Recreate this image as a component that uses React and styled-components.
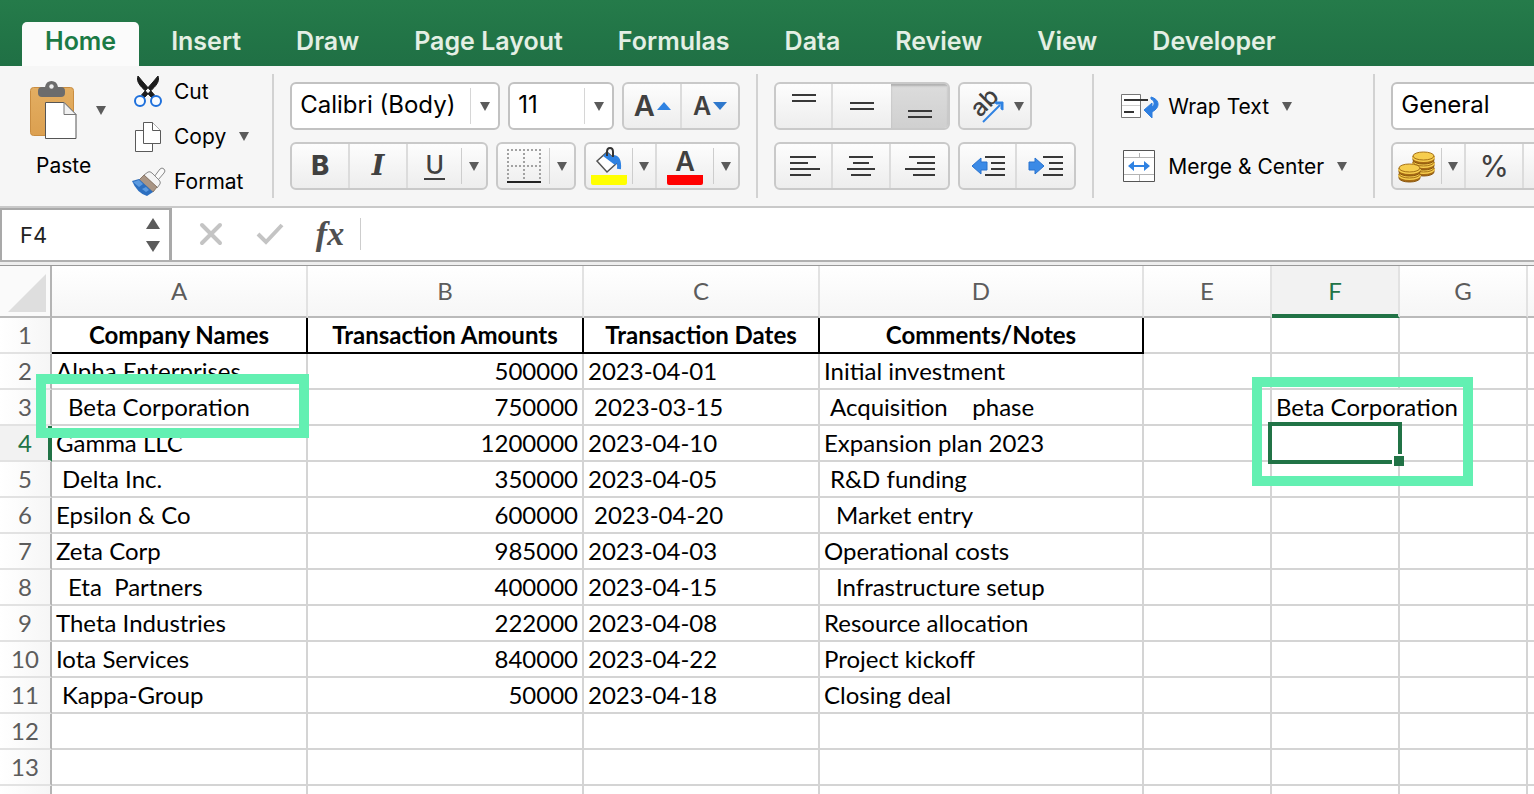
import React from "react";
import styled, { createGlobalStyle, css } from "styled-components";

const UI = `Inter, "Liberation Sans", sans-serif`;
const SHEET = `Lato, "Liberation Sans", sans-serif`;
const GREEN = "#217346";
const MINT = "#63f0b2";
const LINE = "#d4d4d4";

const GlobalStyle = createGlobalStyle`
  *, *::before, *::after { box-sizing: border-box; }
  body { margin: 0; background: #fff; font-family: ${UI}; color: #000; }
  button, input, select { font-family: inherit; color: inherit; margin: 0; }
  button { cursor: pointer; }
  svg { display: block; flex: none; overflow: visible; }
`;

const Window = styled.div`
  display: flex;
  flex-direction: column;
  height: 100vh;
  overflow: hidden;
`;

/* ---------- tabs ---------- */
const TabBar = styled.nav`
  display: flex;
  flex: none;
  gap: 9px;
  padding: 22px 22px 0;
  background: linear-gradient(#257b4a, ${GREEN} 70%, #207045);
`;

const Tab = styled.button`
  height: 44px;
  padding: 0 23px 6px;
  border: 0;
  border-radius: 5px 5px 0 0;
  font-size: 25px;
  font-weight: 600;
  white-space: nowrap;
  background: ${(p) => (p.$active ? "#fbfbfb" : "transparent")};
  color: ${(p) => (p.$active ? "#1b7a45" : "#e4efe4")};
`;

/* ---------- ribbon ---------- */
const Ribbon = styled.div`
  display: flex;
  height: 142px;
  flex: none;
  padding-top: 8px;
  overflow: hidden;
  background: #f6f6f6;
  border-bottom: 2px solid #c9c9c9;
`;

const Section = styled.section`
  display: flex;
  flex: none;
  gap: 8px;
  height: 124px;
  padding: ${(p) => p.$pad || "8px 16px"};
  border-right: ${(p) => (p.$last ? "0" : "2px solid #d2d2d2")};
`;

const Stack = styled.div`
  display: flex;
  flex-direction: column;
  gap: ${(p) => p.$gap || 0}px;
`;

const Row = styled.div`
  display: flex;
  gap: 8px;
`;

const PasteButton = styled.button`
  display: grid;
  grid-template-columns: 50px 46px;
  grid-template-rows: 70px 40px;
  align-items: center;
  justify-items: center;
  height: 110px;
  padding: 0;
  border: 0;
  background: none;
  font-size: 21px;
`;

const PasteLabel = styled.span`
  grid-column: 1 / 3;
  justify-self: start;
  padding-left: 8px;
`;

const LabelButton = styled.button`
  display: flex;
  align-items: center;
  gap: 8px;
  height: ${(p) => p.$h || 34}px;
  padding: 0;
  border: 0;
  background: none;
  font-size: 21px;
  white-space: nowrap;

  & > svg:last-child {
    margin-left: 5px;
  }
`;

const IconSlot = styled.span`
  display: flex;
  width: ${(p) => p.$w || 34}px;
  padding-left: ${(p) => p.$lead || 0}px;
`;

const Group = styled.div`
  display: flex;
  height: 48px;
  border: 2px solid #c9c9c9;
  border-radius: 6px;
  overflow: hidden;
  background: linear-gradient(#fdfdfd, #ededed);
`;

const Segment = styled.button`
  display: flex;
  flex: none;
  align-items: center;
  justify-content: center;
  gap: ${(p) => p.$gap || 0}px;
  width: ${(p) => p.$w || 58}px;
  height: 44px;
  padding: 0 0 0 ${(p) => p.$lead || 0}px;
  border: 0;
  background: ${(p) => (p.$pressed ? "linear-gradient(#dcdcdc, #d0d0d0)" : "none")};
  ${(p) => p.$pressed && css`box-shadow: inset 0 2px 2px #b0b0b0;`}
  ${(p) => p.$divided && css`border-right: 2px solid #dcdcdc;`}
  color: #404040;
`;

const Glyph = styled.span`
  font-family: ${(p) => (p.$serif ? `"DejaVu Serif", serif` : UI)};
  font-size: ${(p) => p.$size || 27}px;
  font-weight: ${(p) => p.$weight || 400};
  font-style: ${(p) => (p.$italic ? "italic" : "normal")};
  line-height: 26px;
  ${(p) => p.$underline && css`padding: 0 1px; border-bottom: 2px solid #404040;`}
`;

const Colored = styled.span`
  display: flex;
  flex-direction: column;
  align-items: center;
  justify-content: flex-end;
  width: 36px;
  height: 38px;
  border-bottom: 10px solid ${(p) => p.$color};
  border-radius: 2px;
`;

const Divider = styled.span`
  width: 1px;
  height: ${(p) => p.$h || 36}px;
  align-self: center;
  background: #cdcdcd;
`;

const SelectBox = styled.div`
  display: grid;
  grid-template-columns: 1fr 28px;
  align-items: center;
  width: ${(p) => p.$w}px;
  height: 48px;
  border: 2px solid #c2c2c2;
  border-radius: 6px;
  background: #fff;
`;

const Select = styled.select`
  grid-area: 1 / 1 / 2 / 3;
  width: 100%;
  height: 44px;
  padding: 0 0 4px 8px;
  border: 0;
  outline: 0;
  appearance: none;
  background: transparent;
  font-size: 24px;
`;

const SelectArrow = styled.span`
  grid-area: 1 / 2;
  display: flex;
  align-items: center;
  justify-content: center;
  height: 36px;
  border-left: 1px solid #d6d6d6;
  pointer-events: none;
`;

/* ---------- formula bar ---------- */
const FormulaBar = styled.div`
  display: flex;
  align-items: center;
  flex: none;
  height: 58px;
  background: #fff;
  border-bottom: 1px solid #999;
  box-shadow: inset 0 -3px #eee, inset 0 -5px #b0b0b0;
  padding-bottom: 5px;
`;

const NameBox = styled.div`
  display: flex;
  align-items: center;
  width: 172px;
  height: 52px;
  padding-right: 9px;
  border: solid #a9a9a9;
  border-width: 2px 3px 0 2px;
`;

const NameInput = styled.input`
  flex: 1;
  min-width: 0;
  height: 44px;
  padding: 0 0 0 18px;
  border: 0;
  outline: 0;
  font-size: 22px;
  color: #222;
`;

const BarButton = styled.button`
  display: flex;
  align-items: center;
  justify-content: center;
  width: ${(p) => p.$w || 58}px;
  height: 44px;
  padding: 0 0 0 ${(p) => p.$lead || 0}px;
  border: 0;
  background: none;
`;

const Fx = styled.span`
  font-family: "Liberation Serif", serif;
  font-style: italic;
  font-weight: 700;
  font-size: 34px;
  line-height: 40px;
  color: #505050;
`;

const FormulaInput = styled.input`
  flex: 1;
  min-width: 0;
  height: 44px;
  padding: 0 12px;
  border: 0;
  outline: 0;
  font-size: 22px;
`;

/* ---------- sheet ---------- */
const Sheet = styled.main`
  flex: 1;
  min-height: 0;
  overflow: hidden;
`;

const Table = styled.table`
  width: 100%;
  min-width: 1534px;
  table-layout: fixed;
  border-collapse: separate;
  border-spacing: 0;
  font-family: ${SHEET};
  font-size: 24px;
  line-height: 30px;

  tr > :last-child {
    border-right: 0;
  }
`;

const Col = styled.col`
  width: ${(p) => (p.$w ? `${p.$w}px` : "auto")};
`;

const ColHead = styled.th`
  height: 52px;
  padding: 0;
  font-weight: 400;
  color: #5c5c5c;
  border-bottom: 2px solid #bababa;
  border-right: 2px solid #e2e2e2;
  background: linear-gradient(#fff, #f6f6f6);
  ${(p) => p.$active && css`
    color: ${GREEN};
    background: #f2f2f2;
    border-bottom-color: ${GREEN};
    box-shadow: inset 0 -2px ${GREEN};
  `}
`;

const Corner = styled.th`
  height: 52px;
  padding: 8px 4px 4px 8px;
  border-right: 2px solid #b4b4b4;
  border-bottom: 2px solid #bababa;
  background: #fafafa;
`;

const RowHead = styled.th`
  height: 36px;
  padding: 0;
  font-weight: 400;
  color: #5c5c5c;
  border-right: 2px solid #b4b4b4;
  border-bottom: 2px solid #e2e2e2;
  background: linear-gradient(90deg, #fff, #f6f6f6);
  ${(p) => p.$active && css`
    color: ${GREEN};
    background: #f2f2f2;
    border-right-color: ${GREEN};
    box-shadow: inset -2px 0 ${GREEN};
  `}
`;

const Cell = styled.td`
  position: relative;
  height: 36px;
  padding: 0 4px;
  white-space: pre;
  text-align: ${(p) => p.$align || "left"};
  text-indent: ${(p) => (p.$indent || 0) * 6}px;
  border-right: 2px solid ${(p) => (p.$spill ? "transparent" : LINE)};
  border-bottom: 2px solid ${LINE};
  ${(p) => p.$heading && css`
    font-weight: 700;
    text-align: center;
    border-color: #000;
  `}
`;

const Highlight = styled.div`
  position: absolute;
  z-index: 2;
  left: ${(p) => p.$x}px;
  top: ${(p) => p.$y}px;
  width: ${(p) => p.$w}px;
  height: ${(p) => p.$h}px;
  border: 10px solid ${MINT};
  pointer-events: none;
`;

const Selection = styled.div`
  position: absolute;
  z-index: 1;
  inset: -4px;
  border: 4px solid ${GREEN};

  &::after {
    content: "";
    position: absolute;
    right: -6px;
    bottom: -6px;
    width: 12px;
    height: 12px;
    background: ${GREEN};
    border: solid #fff;
    border-width: 2px 0 0 2px;
  }
`;

/* ---------- icons ---------- */
const Caret = ({ up, w = 10, h = 9, color = "#5b5b5b" }) => (
  <svg width={w} height={h} viewBox="0 0 10 9" preserveAspectRatio="none" aria-hidden="true">
    <path d={up ? "M0 9 5 0l5 9z" : "M0 0h10L5 9z"} fill={color} />
  </svg>
);

const PasteIcon = () => (
  <svg width="50" height="60" viewBox="0 0 50 60" aria-hidden="true">
    <defs>
      <linearGradient id="board" x1="0" x2="0" y1="0" y2="1">
        <stop offset="0" stopColor="#e3ae62" /><stop offset="1" stopColor="#dca050" />
      </linearGradient>
    </defs>
    <rect x="2.5" y="7.5" width="43" height="48" rx="3" fill="url(#board)" stroke="#c98d41" />
    <path d="M14 17q-4 0-4-4v-2q0-4 4-4h3q1-6 6.500-6T30 7h3q4 0 4 4v2q0 4-4 4z" fill="#6c6c6c" />
    <circle cx="23.500" cy="6.500" r="2.200" fill="#eee" />
    <path d="M17.500 22.500H36l12 12v24H17.500z" fill="#fff" stroke="#555" />
    <path d="M36 22.500v12h12z" fill="#f1f1f1" stroke="#777" />
  </svg>
);

const CutIcon = () => (
  <svg width="32" height="32" viewBox="0 0 32 32" aria-hidden="true">
    <path d="M6 0C4.500 4 6 8 12 13.500L20 22l2.500-3L11 6zM26 0c1.500 4 0 8-6 13.500L12 22l-2.500-3L21 6z" fill="#1c1c1c" stroke="#1c1c1c" />
    <g fill="#f8fbff" stroke="#1e70dc" strokeWidth="2">
      <circle cx="8" cy="25" r="5" /><circle cx="24" cy="25" r="5" />
    </g>
  </svg>
);

const CopyIcon = () => (
  <svg width="28" height="32" viewBox="0 0 28 32" fill="#fff" stroke="#5a5a5a" aria-hidden="true">
    <path d="M1.500 9.500h17v21h-17z" />
    <path d="M9.500 1.500h9l8 8v13h-17z" />
    <path d="M18.500 1.500v8h8" />
  </svg>
);

const BrushIcon = () => (
  <svg width="32" height="30" viewBox="0 0 32 30" aria-hidden="true">
    <path d="M22 10l6-8q2-2 4 0t0 4l-6 7z" fill="#fafafa" stroke="#888" />
    <path d="M16 5q2-1 4 1l7 7q2 2 1 4l-3 4L12 8z" fill="#f4f4f4" stroke="#888" />
    <path d="M12 8l13 12-4 5L7 13z" fill="#a99584" stroke="#8a7868" />
    <path d="M0 14l7-2 14 13-6 4Q5 26 0 14z" fill="#2c6fc0" />
    <path d="M1 15l6-2 4 4-4 3zM10 22l4-2 3 3-3 2z" fill="#5b9ae0" />
  </svg>
);

const BorderIcon = () => (
  <svg width="36" height="36" viewBox="0 0 36 36" aria-hidden="true">
    <path d="M1 2h34M1 18h34M2 1v32M18 1v32M34 1v32" stroke="#a2a2a2" strokeWidth="2" strokeDasharray="2 2" />
    <path d="M1 34h34" stroke="#222" strokeWidth="2" />
  </svg>
);

const BucketIcon = () => (
  <svg width="28" height="28" viewBox="0 0 28 28" aria-hidden="true">
    <path d="M2 14 12 5l11 10-11 10z" fill="#fff" stroke="#555" strokeWidth="1.500" />
    <path d="M8 9l4-4 11 10-3 3z" fill="#2f82e2" />
    <path d="M18 10q7 0 6 12" fill="none" stroke="#2f82e2" strokeWidth="4" />
    <path d="M12 9V5q0-4 3-4t3 4v5" fill="none" stroke="#333" strokeWidth="2" />
  </svg>
);

const Lines = ({ rows, w = 32, h = 24 }) => (
  <svg width={w} height={h} viewBox={`0 0 ${w} ${h}`} stroke="#383838" strokeWidth="2" aria-hidden="true">
    {rows.map(([x1, x2, y]) => <path key={y} d={`M${x1} ${y}H${x2}`} />)}
  </svg>
);

const OrientationIcon = () => (
  <svg width="34" height="36" viewBox="0 0 34 36" aria-hidden="true">
    <text x="0" y="0" transform="translate(10 30) rotate(-45)" fontFamily="Inter, sans-serif" fontSize="24" fontWeight="500" fill="#404040">ab</text>
    <path d="M13 34 30 17" fill="none" stroke="#2f82e2" strokeWidth="2" />
    <path d="M25 14h8v8l-2-1v-5h-5z" fill="#2f82e2" stroke="#2f82e2" />
  </svg>
);

const IndentIcon = ({ right }) => (
  <svg width="36" height="24" viewBox="0 0 36 24" aria-hidden="true">
    <path d={right ? "M1 8h6V4l9 8-9 8v-4H1z" : "M17 8h-6V4l-9 8 9 8v-4h6z"} fill="#3b8ae6" stroke="#2873cf" />
    <path d="M15 3h20M21 9h14M21 15h14M15 21h20" stroke="#383838" strokeWidth="2" />
  </svg>
);

const WrapIcon = () => (
  <svg width="40" height="26" viewBox="0 0 40 26" aria-hidden="true">
    <path d="M1.500 1.500h19v23h-19z" fill="#fff" stroke="#777" />
    <path d="M2 12.500h18" stroke="#ccc" />
    <path d="M4 7h24M4 19h10" stroke="#333" strokeWidth="2" />
    <path d="M31 4c8 2 9 9 4 13l-3 2v6l-8-8 8-7v4c3-2 3-6-1-8z" fill="#2f7fe0" stroke="#2f7fe0" />
  </svg>
);

const MergeIcon = () => (
  <svg width="32" height="32" viewBox="0 0 32 32" aria-hidden="true">
    <path d="M.500.500h31v31H.500z" fill="#fff" stroke="#555" />
    <path d="M1 7.500h30M1 24.500h30M16.500 3v4M16.500 25v6" stroke="#b4b4b4" />
    <path d="M8 16h16" stroke="#2f82e2" strokeWidth="2" />
    <path d="M5 16l6-5v10zM27 16l-6-5v10z" fill="#2f82e2" />
  </svg>
);

const CoinStack = ({ x, y, n }) => (
  <g>
    {Array.from({ length: n }, (_, i) => {
      const cy = y + (n - 1 - i) * 6;
      return (
        <g key={i}>
          <path d={`M${x} ${cy}v4a10.500 4 0 0 0 21 0v-4z`} fill="#a86c14" stroke="#8a560e" />
          <path d={`M${x} ${cy + 1}a10.500 4 0 0 0 21 0`} fill="none" stroke="#f6cd4e" strokeWidth="2" />
          <ellipse cx={x + 10.5} cy={cy} rx="10.500" ry="4" fill="#f6cd4e" stroke="#a87318" />
        </g>
      );
    })}
  </g>
);

const CoinsIcon = () => (
  <svg width="38" height="32" viewBox="0 0 38 32" aria-hidden="true">
    <CoinStack x={15} y={6} n={3} />
    <CoinStack x={1} y={18} n={2} />
  </svg>
);

/* ---------- data ---------- */
const TABS = ["Home", "Insert", "Draw", "Page Layout", "Formulas", "Data", "Review", "View", "Developer"];
const COLUMNS = [["A", 256], ["B", 276], ["C", 236], ["D", 324], ["E", 128], ["F", 128], ["G", 128], ["", 0]];
const HEADINGS = ["Company Names", "Transaction Amounts", "Transaction Dates", "Comments/Notes"];
const DATA = [
  ["Alpha Enterprises", "500000", "2023-04-01", "Initial investment"],
  ["  Beta Corporation", "750000", " 2023-03-15", " Acquisition    phase"],
  ["Gamma LLC", "1200000", "2023-04-10", "Expansion plan 2023"],
  [" Delta Inc.", "350000", "2023-04-05", " R&D funding"],
  ["Epsilon & Co", "600000", " 2023-04-20", "  Market entry"],
  ["Zeta Corp", "985000", "2023-04-03", "Operational costs"],
  ["  Eta  Partners", "400000", "2023-04-15", "  Infrastructure setup"],
  ["Theta Industries", "222000", "2023-04-08", "Resource allocation"],
  ["Iota Services", "840000", "2023-04-22", "Project kickoff"],
  [" Kappa-Group", "50000", "2023-04-18", "Closing deal"],
];
const LAST_ROW = 13;
const ROWS = Array.from({ length: LAST_ROW + 1 }, (_, i) => i + 1);

function SheetCell({ row, col }) {
  if (row === 1 && col < 4) return <Cell $heading>{HEADINGS[col]}</Cell>;
  if (row === 3 && col === 5) {
    return <Cell $spill>Beta Corporation<Highlight $x={-20} $y={-13} $w={221} $h={109} /></Cell>;
  }
  if (row === 4 && col === 5) return <Cell><Selection /></Cell>;
  const value = (DATA[row - 2] && DATA[row - 2][col]) || "";
  const text = value.trimStart();
  return (
    <Cell $align={col === 1 ? "right" : "left"} $indent={value.length - text.length}>
      {text}
      {row === 3 && col === 0 && <Highlight $x={-16} $y={-16} $w={273} $h={64} />}
    </Cell>
  );
}

const DropSegment = ({ label, ...rest }) => (
  <Segment $w={24} aria-label={label} {...rest}><Caret /></Segment>
);

export default function App() {
  return (
    <Window>
      <GlobalStyle />
      <TabBar aria-label="Ribbon tabs">
        {TABS.map((t) => <Tab key={t} $active={t === "Home"}>{t}</Tab>)}
      </TabBar>

      <Ribbon>
        <Section $pad="1px 23px 0 28px">
          <PasteButton>
            <PasteIcon /><Caret />
            <PasteLabel>Paste</PasteLabel>
          </PasteButton>
          <Stack $gap={12}>
            <LabelButton><IconSlot><CutIcon /></IconSlot>Cut</LabelButton>
            <LabelButton><IconSlot $lead={2}><CopyIcon /></IconSlot>Copy<Caret /></LabelButton>
            <LabelButton><IconSlot><BrushIcon /></IconSlot>Format</LabelButton>
          </Stack>
        </Section>

        <Section>
          <Stack $gap={12}>
            <Row>
              <SelectBox $w={210}>
                <Select aria-label="Font"><option>Calibri (Body)</option></Select>
                <SelectArrow><Caret /></SelectArrow>
              </SelectBox>
              <SelectBox $w={106}>
                <Select aria-label="Font size"><option>11</option></Select>
                <SelectArrow><Caret /></SelectArrow>
              </SelectBox>
              <Group>
                <Segment $divided $gap={2} $w={58} aria-label="Increase font size"><Glyph $size={29} $weight={600}>A</Glyph><Caret up w={14} h={8} color="#2f82e2" /></Segment>
                <Segment $gap={2} $w={56} aria-label="Decrease font size"><Glyph $size={25} $weight={600}>A</Glyph><Caret w={14} h={8} color="#2f78cc" /></Segment>
              </Group>
            </Row>
            <Row>
              <Group>
                <Segment $divided aria-label="Bold"><Glyph $weight={800}>B</Glyph></Segment>
                <Segment $divided aria-label="Italic"><Glyph $serif $italic $weight={700}>I</Glyph></Segment>
                <Segment $w={53} aria-label="Underline"><Glyph $size={25} $weight={500} $underline>U</Glyph></Segment>
                <Divider />
                <DropSegment label="Underline options" />
              </Group>
              <Group>
                <Segment $w={51} aria-label="Borders"><BorderIcon /></Segment>
                <Divider />
                <DropSegment label="Border options" />
              </Group>
              <Group>
                <Segment $w={46} aria-label="Fill color"><Colored $color="#ffff00"><BucketIcon /></Colored></Segment>
                <Divider />
                <DropSegment label="Fill options" $divided />
                <Segment $w={56} aria-label="Font color"><Colored $color="#ff0000"><Glyph $weight={600}>A</Glyph></Colored></Segment>
                <Divider />
                <DropSegment label="Font color options" />
              </Group>
            </Row>
          </Stack>
        </Section>

        <Section>
          <Stack $gap={12}>
            <Row>
              <Group>
                <Segment $divided $w={57} aria-label="Top align"><Lines rows={[[4, 28, 1], [4, 28, 7]]} /></Segment>
                <Segment $w={58} aria-label="Middle align"><Lines rows={[[4, 28, 9], [4, 28, 15]]} /></Segment>
                <Segment $pressed $w={57} aria-label="Bottom align"><Lines rows={[[4, 28, 17], [4, 28, 23]]} /></Segment>
              </Group>
              <Group>
                <Segment $w={70} $gap={10} $lead={4} aria-label="Orientation"><OrientationIcon /><Caret /></Segment>
              </Group>
            </Row>
            <Row>
              <Group>
                <Segment $divided $w={57} aria-label="Align left"><Lines rows={[[2, 28, 3], [2, 20, 9], [2, 32, 15], [2, 23, 21]]} /></Segment>
                <Segment $divided $w={58} aria-label="Center"><Lines rows={[[4, 28, 3], [8, 24, 9], [2, 30, 15], [6, 26, 21]]} /></Segment>
                <Segment $w={57} aria-label="Align right"><Lines rows={[[5, 31, 3], [13, 31, 9], [1, 31, 15], [9, 31, 21]]} /></Segment>
              </Group>
              <Group>
                <Segment $divided $w={57} aria-label="Decrease indent"><IndentIcon /></Segment>
                <Segment $w={57} aria-label="Increase indent"><IndentIcon right /></Segment>
              </Group>
            </Row>
          </Stack>
        </Section>

        <Section $pad="8px 26px">
          <Stack $gap={12}>
            <LabelButton $h={48}><IconSlot $w={40}><WrapIcon /></IconSlot>Wrap Text<Caret /></LabelButton>
            <LabelButton $h={48}><IconSlot $w={40} $lead={3}><MergeIcon /></IconSlot>Merge &amp; Center<Caret /></LabelButton>
          </Stack>
        </Section>

        <Section $last>
          <Stack $gap={12}>
            <SelectBox $w={240}>
              <Select aria-label="Number format"><option>General</option></Select>
              <SelectArrow><Caret /></SelectArrow>
            </SelectBox>
            <Group>
              <Segment $w={48} aria-label="Accounting format"><CoinsIcon /></Segment>
              <Divider />
              <DropSegment label="Accounting options" $divided />
              <Segment $divided aria-label="Percent style"><Glyph $size={30}>%</Glyph></Segment>
              <Segment aria-label="Comma style" />
            </Group>
          </Stack>
        </Section>
      </Ribbon>

      <FormulaBar>
        <NameBox>
          <NameInput aria-label="Name box" defaultValue="F4" />
          <Stack $gap={12}><Caret up w={14} h={11} /><Caret w={14} h={11} /></Stack>
        </NameBox>
        <BarButton $w={78} aria-label="Cancel">
          <svg width="24" height="24" viewBox="0 0 24 24" stroke="#c4c4c4" strokeWidth="4" strokeLinecap="round"><path d="M3 3l18 18M21 3 3 21" /></svg>
        </BarButton>
        <BarButton $w={40} aria-label="Enter">
          <svg width="28" height="24" viewBox="0 0 28 24" fill="none" stroke="#c4c4c4" strokeWidth="4"><path d="M2 12l8 8L26 3" /></svg>
        </BarButton>
        <BarButton $w={70} $lead={10} aria-label="Insert function"><Fx>fx</Fx></BarButton>
        <Divider $h={32} />
        <FormulaInput aria-label="Formula" />
      </FormulaBar>

      <Sheet>
        <Table>
          <colgroup>
            <Col $w={52} />
            {COLUMNS.map(([name, w]) => <Col key={name} $w={w} />)}
          </colgroup>
          <thead>
            <tr>
              <Corner aria-label="Select all">
                <svg width="38" height="38" viewBox="0 0 38 38"><path d="M38 0v38H0z" fill="#dedede" /></svg>
              </Corner>
              {COLUMNS.map(([name]) => <ColHead key={name} $active={name === "F"}>{name}</ColHead>)}
            </tr>
          </thead>
          <tbody>
            {ROWS.map((r) => (
              <tr key={r}>
                <RowHead scope="row" $active={r === 4}>{r <= LAST_ROW && r}</RowHead>
                {COLUMNS.map(([name], c) => <SheetCell key={name} row={r} col={c} />)}
              </tr>
            ))}
          </tbody>
        </Table>
      </Sheet>
    </Window>
  );
}
